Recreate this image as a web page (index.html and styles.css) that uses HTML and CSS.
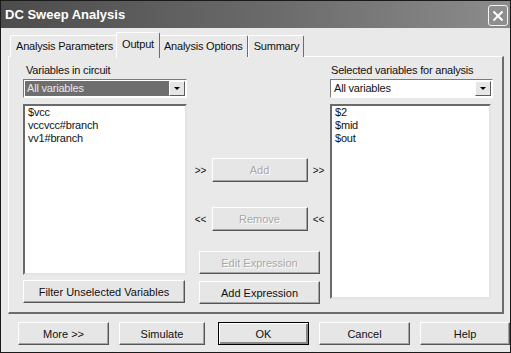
FILE: index.html
```html
<!DOCTYPE html>
<html lang="en">
  <head>
    <meta charset="UTF-8" />
    <title>DC Sweep Analysis</title>
    <link rel="stylesheet" href="styles.css">
  </head>
  <body>
    <div class="window">
      <div class="titlebar">
        <span class="title">DC Sweep Analysis</span>
        <span class="close">
          <svg width="12" height="12" viewBox="0 0 12 12">
            <path d="M1.5 1.5 L10.5 10.5 M10.5 1.5 L1.5 10.5" stroke="#fff" stroke-width="2" />
          </svg>
        </span>
      </div>

      <div class="tabs">
        <div class="tab">Analysis Parameters</div>
        <div class="tab active">Output</div>
        <div class="tab">Analysis Options</div>
        <div class="tab">Summary</div>
      </div>

      <div class="panel">
        <div class="col">
          <div class="label">Variables in circuit</div>
          <div class="select focused">
            <span class="value">All variables</span>
            <span class="arrow"></span>
          </div>
          <div class="list short">
            <div>$vcc</div>
            <div>vccvcc#branch</div>
            <div>vv1#branch</div>
          </div>
          <button class="btn wide">Filter Unselected Variables</button>
        </div>

        <div class="col middle">
          <div class="move add-row">
            <span class="chev">&gt;&gt;</span>
            <button class="btn move-btn" disabled>Add</button>
            <span class="chev">&gt;&gt;</span>
          </div>
          <div class="move remove-row">
            <span class="chev">&lt;&lt;</span>
            <button class="btn move-btn" disabled>Remove</button>
            <span class="chev">&lt;&lt;</span>
          </div>
          <button class="btn expr edit" disabled>Edit Expression</button>
          <button class="btn expr">Add Expression</button>
        </div>

        <div class="col">
          <div class="label right">Selected variables for analysis</div>
          <div class="select">
            <span class="value">All variables</span>
            <span class="arrow"></span>
          </div>
          <div class="list tall">
            <div>$2</div>
            <div>$mid</div>
            <div>$out</div>
          </div>
        </div>
      </div>

      <div class="footer">
        <button class="btn">More &gt;&gt;</button>
        <button class="btn sim">Simulate</button>
        <button class="btn default">OK</button>
        <button class="btn">Cancel</button>
        <button class="btn help">Help</button>
      </div>
    </div>
  </body>
</html>
```

FILE: styles.css
```css
* {
  box-sizing: border-box;
  margin: 0;
  padding: 0;
}
body {
  background: #fff;
  font-family: "Liberation Sans", Arial, sans-serif;
  font-size: 11px;
  letter-spacing: -0.2px;
  color: #111;
}
.window {
  width: 511px;
  height: 353px;
  background: #e9e9e9;
  border: 1px solid #1a1a1a;
  display: flex;
  flex-direction: column;
}

/* title bar */
.titlebar {
  height: 27px;
  background: linear-gradient(90deg, #4c4c4c 0%, #6c6c6c 55%, #8c8c8c 100%);
  display: flex;
  align-items: center;
  justify-content: space-between;
  padding: 0 2px 0 4px;
}
.title {
  color: #fff;
  font-weight: bold;
  font-size: 13px;
  letter-spacing: 0;
}
.close {
  width: 20px;
  height: 21px;
  margin-top: 2px;
  border: 1px solid #f4f4f4;
  border-radius: 3px;
  background: #8e8e8e;
  display: flex;
  align-items: center;
  justify-content: center;
}

/* tabs */
.tabs {
  display: flex;
  align-items: flex-end;
  height: 25px;
  margin: 4px 0 0 9px;
  position: relative;
  z-index: 1;
}
.tab {
  height: 22px;
  line-height: 20px;
  padding: 0 4px 0 5px;
  border: 1px solid #fff;
  border-right: 1px solid #6c6c6c;
  border-bottom: none;
  border-radius: 2px 2px 0 0;
  background: #e9e9e9;
}
.tab.active {
  height: 26px;
  line-height: 22px;
  margin: 0 -1px -1px -2px;
  padding: 0 5px;
  position: relative;
}
.tab.active + .tab {
  margin-left: -1px;
}

/* panel */
.panel {
  height: 258px;
  margin: -1px 6px 0 7px;
  border: 1px solid #fff;
  border-right: 2px solid #6c6c6c;
  border-bottom: 2px solid #6c6c6c;
  display: grid;
  grid-template-columns: 164px 1fr 163px;
  padding: 7px 9px 0 14px;
}
.col {
  display: flex;
  flex-direction: column;
}
.label {
  height: 13px;
  line-height: 13px;
  margin-bottom: 2px;
  padding-left: 3px;
}
.label.right {
  padding-left: 1px;
}
.select {
  height: 19px;
  display: flex;
  border: 1px solid #7a7a7a;
  border-right-color: #fff;
  border-bottom-color: #fff;
  background: #fff;
  padding: 1px;
}
.select .value {
  flex: 1;
  line-height: 15px;
  padding-left: 2px;
}
.select.focused .value {
  background: #6e6e6e;
  color: #e8e8e8;
}
.arrow {
  width: 16px;
  background: #e6e6e6;
  border: 1px solid #fff;
  border-right-color: #5a5a5a;
  border-bottom-color: #5a5a5a;
  display: flex;
  align-items: center;
  justify-content: center;
}
.arrow::after {
  content: "";
  border-left: 3px solid transparent;
  border-right: 3px solid transparent;
  border-top: 3px solid #000;
}
.list {
  margin-top: 6px;
  background: #fff;
  border: 2px solid #6a6a6a;
  border-right-color: #e4e4e4;
  border-bottom-color: #e4e4e4;
  padding: 0 3px;
  line-height: 13px;
}
.list.short {
  height: 171px;
}
.list.tall {
  width: 161px;
  height: 195px;
}

/* buttons */
.btn {
  font: inherit;
  color: #111;
  height: 23px;
  background: #e6e6e6;
  border: 1px solid #fff;
  border-right-color: #555;
  border-bottom-color: #555;
  box-shadow: inset -1px -1px #a4a4a4;
}
.btn:disabled {
  color: #a8a8a8;
  text-shadow: 1px 1px #fff;
}
.btn.wide {
  margin-top: 5px;
  width: 162px;
}
.middle {
  align-items: center;
  padding-left: 2px;
}
.move {
  display: flex;
  align-items: center;
  gap: 5px;
}
.add-row {
  margin-top: 94px;
}
.remove-row {
  margin-top: 25px;
}
.chev {
  width: 12px;
  font-size: 10px;
  letter-spacing: 0;
  text-align: center;
}
.move-btn {
  width: 96px;
  height: 24px;
}
.expr {
  width: 121px;
}
.expr.edit {
  margin-top: 20px;
}
.expr.edit + .expr {
  margin-top: 7px;
}

/* bottom buttons */
.footer {
  display: flex;
  gap: 10px;
  margin-top: 8px;
  padding-left: 17px;
}
.footer .btn {
  width: 91px;
}
.footer .btn.sim {
  width: 86px;
  margin-right: 3px;
}
.footer .btn.help {
  width: 90px;
}
.btn.default {
  border: 1px solid #000;
  box-shadow: inset 1px 1px #fff, inset -2px -2px #888;
}
```
